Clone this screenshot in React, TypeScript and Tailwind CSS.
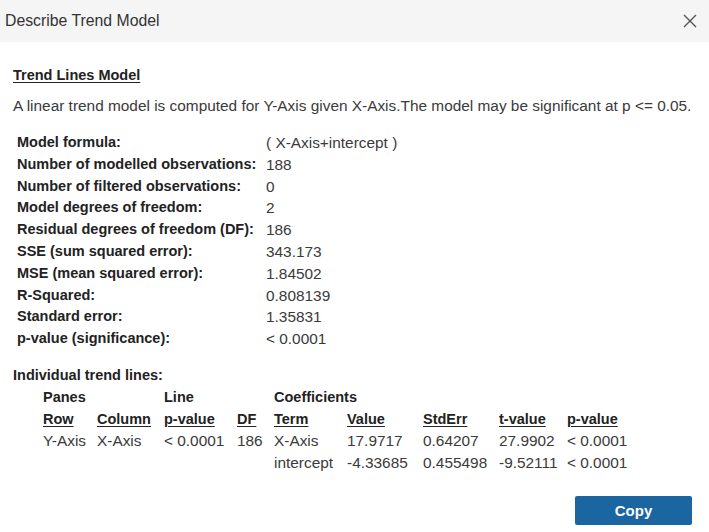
import React from 'react';

const stats: [string, string][] = [
    ['Model formula:', '( X-Axis+intercept )'],
    ['Number of modelled observations:', '188'],
    ['Number of filtered observations:', '0'],
    ['Model degrees of freedom:', '2'],
    ['Residual degrees of freedom (DF):', '186'],
    ['SSE (sum squared error):', '343.173'],
    ['MSE (mean squared error):', '1.84502'],
    ['R-Squared:', '0.808139'],
    ['Standard error:', '1.35831'],
    ['p-value (significance):', '< 0.0001'],
];

const cols = 'grid grid-cols-[54px_67px_73px_37px_73px_76px_76px_68px_auto]';

export default function App() {
    return (
        <div
            className="w-[709px] h-[532px] bg-white text-[#3a3a3a] flex flex-col"
            style={{ fontFamily: '"Liberation Sans", Arial, sans-serif' }}
        >
            {/* Header */}
            <div className="h-[42px] bg-[#f5f5f5] flex items-center justify-between pl-[5px] pr-[12px]">
                <span className="text-[15.8px] text-[#333]">Describe Trend Model</span>
                <svg width="14" height="14" viewBox="0 0 14 14" className="text-[#555]">
                    <path d="M1 1L13 13M13 1L1 13" stroke="currentColor" strokeWidth="1.4" />
                </svg>
            </div>

            <div className="flex-1 flex flex-col px-[13px] pt-[22px] text-[15.4px] leading-[22px]">
                <div className="font-bold text-[14.5px] underline underline-offset-2 text-[#222]">Trend Lines Model</div>
                <p className="mt-[9px] whitespace-nowrap">
                    A linear trend model is computed for Y-Axis given X-Axis.The model may be significant at p &lt;= 0.05.
                </p>

                {/* Model stats */}
                <div className="mt-[15px] pl-[4px] grid grid-cols-[249px_auto] leading-[21.8px]">
                    {stats.map(([k, v]) => (
                        <React.Fragment key={k}>
                            <span className="font-bold text-[14.5px] text-[#222]">{k}</span>
                            <span>{v}</span>
                        </React.Fragment>
                    ))}
                </div>

                {/* Individual trend lines */}
                <div className="mt-[14px] font-bold text-[14.5px] text-[#222]">Individual trend lines:</div>
                <div className="pl-[30px]">
                    <div className={`${cols} font-bold text-[14.5px] text-[#222]`}>
                        <span className="col-span-2">Panes</span>
                        <span className="col-span-2">Line</span>
                        <span className="col-span-5">Coefficients</span>
                    </div>
                    <div className={`${cols} font-bold text-[14.5px] text-[#222] underline underline-offset-2`}>
                        <span>Row</span>
                        <span>Column</span>
                        <span>p-value</span>
                        <span>DF</span>
                        <span>Term</span>
                        <span>Value</span>
                        <span>StdErr</span>
                        <span>t-value</span>
                        <span>p-value</span>
                    </div>
                    <div className={cols}>
                        <span>Y-Axis</span>
                        <span>X-Axis</span>
                        <span>&lt; 0.0001</span>
                        <span>186</span>
                        <span>X-Axis</span>
                        <span>17.9717</span>
                        <span>0.64207</span>
                        <span>27.9902</span>
                        <span>&lt; 0.0001</span>
                    </div>
                    <div className={cols}>
                        <span />
                        <span />
                        <span />
                        <span />
                        <span>intercept</span>
                        <span>-4.33685</span>
                        <span>0.455498</span>
                        <span>-9.52111</span>
                        <span>&lt; 0.0001</span>
                    </div>
                </div>

                <div className="mt-auto mb-[7px] flex justify-end pr-[4px]">
                    <button className="w-[117px] h-[29px] bg-[#1b65a0] text-white font-bold text-[15px] rounded-[2px]">
                        Copy
                    </button>
                </div>
            </div>
        </div>
    );
}
